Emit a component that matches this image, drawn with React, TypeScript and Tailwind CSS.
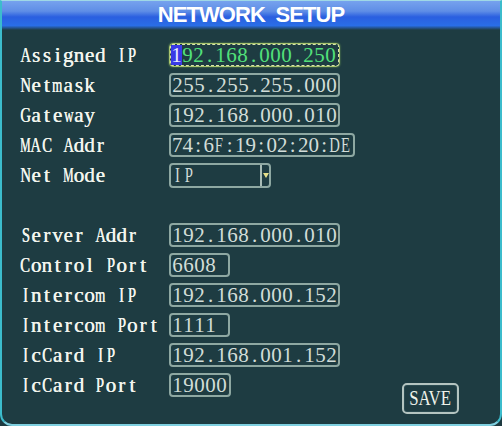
import React from "react";

type Row =
  | { kind: "field"; label: string; value: string; width: string; active?: boolean; cell?: string }
  | { kind: "select"; label: string; value: string }
  | { kind: "blank" };

const rows: Row[] = [
  { kind: "field", label: "Assigned IP", value: "192.168.000.250", width: "w-[171px]", active: true },
  { kind: "field", label: "Netmask", value: "255.255.255.000", width: "w-[171px]" },
  { kind: "field", label: "Gateway", value: "192.168.000.010", width: "w-[171px]" },
  { kind: "field", label: "MAC Addr", value: "74:6F:19:02:20:DE", width: "w-[186px]", cell: "w-[10.5px]" },
  { kind: "select", label: "Net Mode", value: "IP" },
  { kind: "blank" },
  { kind: "field", label: "Server Addr", value: "192.168.000.010", width: "w-[171px]" },
  { kind: "field", label: "Control Port", value: "6608", width: "w-[61px]" },
  { kind: "field", label: "Intercom IP", value: "192.168.000.152", width: "w-[171px]" },
  { kind: "field", label: "Intercom Port", value: "1111", width: "w-[61px]" },
  { kind: "field", label: "IcCard IP", value: "192.168.001.152", width: "w-[171px]" },
];

// the OSD font is a fixed-cell serif: each glyph sits in its own cell,
// wide glyphs get squeezed to fit
function squeeze(ch: string) {
  if (/[MW]/.test(ch)) return "inline-block scale-x-[0.56]";
  if (/[mw]/.test(ch)) return "inline-block scale-x-[0.62]";
  if (/[A-Z]/.test(ch)) return "inline-block scale-x-[0.7]";
  return "inline-block";
}

function Cells({ text, cell }: { text: string; cell: string }) {
  return (
    <>
      {text.split("").map((ch, i) => (
        <span key={i} className={`flex shrink-0 justify-center ${cell}`}>
          <span className={squeeze(ch)}>{ch === " " ? "\u00a0" : ch}</span>
        </span>
      ))}
    </>
  );
}

function Label({ text }: { text: string }) {
  return (
    <span className="flex w-[149px] shrink-0 text-[21px] leading-[20px] text-[#f2f5ee] [text-shadow:0.4px_0_0_#f2f5ee]">
      <Cells text={text} cell="w-[10.7px]" />
    </span>
  );
}

function Field({
  value,
  width,
  active,
  cell = "w-[11px]",
}: {
  value: string;
  width: string;
  active?: boolean;
  cell?: string;
}) {
  if (active) {
    return (
      <div className={`${width} h-[24px] rounded-[4px] border border-[#a9c46e] shadow-[0_0_2px_#6fa050]`}>
        <div className="flex h-full items-center overflow-hidden rounded-[2px] border border-dashed border-[#d6e3a8] text-[21px] leading-[18px] text-[#52e07a]">
          <span className="flex h-full items-center bg-[#3a3ae6] text-[#e8ecff]">
            <Cells text={value.slice(0, 1)} cell={cell} />
          </span>
          <Cells text={value.slice(1)} cell={cell} />
        </div>
      </div>
    );
  }
  return (
    <div
      className={`${width} flex h-[24px] items-center overflow-hidden whitespace-nowrap rounded-[4px] border-2 border-[#8ea8a2] pl-[1px] text-[21px] leading-[18px] text-[#d2ddd8]`}
    >
      <Cells text={value} cell={cell} />
    </div>
  );
}

function Select({ value }: { value: string }) {
  return (
    <div className="flex h-[25px] w-[102px] items-stretch rounded-[4px] border-2 border-[#8ea8a2]">
      <span className="flex flex-1 items-center pl-[1px] text-[21px] leading-[18px] text-[#d2ddd8]">
        <Cells text={value} cell="w-[11px]" />
      </span>
      <span className="flex w-[9px] items-center justify-center border-l-2 border-[#a8bcb6]">
        <svg width="6" height="5" viewBox="0 0 6 5">
          <path d="M0 0 L6 0 L3 5 Z" fill="#e6e08a" />
        </svg>
      </span>
    </div>
  );
}

export default function App() {
  return (
    <div className="h-[426px] w-[502px] overflow-hidden bg-[#1e3a40] font-['Liberation_Serif',serif]">
      <div className="flex h-full flex-col rounded-b-[12px] border-x-2 border-t border-b-2 border-t-[#9fd8e6] border-x-[#3cbccc] border-b-[#7fd0e0] border-b-dotted bg-[#1e3c42]">
        {/* Header */}
        <div className="flex h-[29px] items-center justify-center bg-[linear-gradient(180deg,#76a2ee_0%,#5f8ee6_35%,#2a5fe0_55%,#2a6ee6_85%,#1e3c42_100%)]">
          <h1 className="-mt-[1px] font-['Liberation_Sans',Arial,sans-serif] text-[22px] font-bold leading-none tracking-[-0.9px] text-white">
            NETWORK&nbsp;&nbsp;SETUP
          </h1>
        </div>

        {/* Rows */}
        <div className="flex flex-col pl-[18px] pt-[10px]">
          {rows.map((row, i) => {
            if (row.kind === "blank") return <div key={i} className="h-[30px]" />;
            return (
              <div key={i} className="flex h-[30px] items-center">
                <Label text={row.label} />
                {row.kind === "select" ? (
                  <Select value={row.value} />
                ) : (
                  <Field value={row.value} width={row.width} active={row.active} cell={row.cell} />
                )}
              </div>
            );
          })}

          <div className="flex items-start">
            <div className="flex h-[30px] items-center">
              <Label text="IcCard Port" />
              <Field value="19000" width="w-[62px]" />
            </div>
            <button className="ml-auto mr-[41px] mt-[13px] flex h-[31px] w-[57px] items-center justify-center rounded-[5px] border-2 border-[#b4c4c0] text-[21px] leading-none text-[#eef2ea] shadow-[inset_0_0_0_1px_#2a4a50]">
              <span className="inline-block scale-x-[0.8]">SAVE</span>
            </button>
          </div>
        </div>
      </div>
    </div>
  );
}
